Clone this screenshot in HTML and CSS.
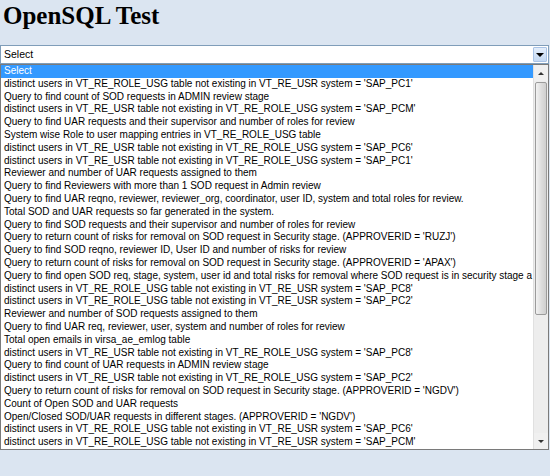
FILE: index.html
```html
<!DOCTYPE html>
<html>
<head>
<meta charset="utf-8">
<title>OpenSQL Test</title>
<link rel="stylesheet" href="styles.css">
</head>
<body>
<h1 class="title">OpenSQL Test</h1>
<div class="combo">
  <div class="combo-value">Select</div>
  <div class="combo-button"><span class="tri-down"></span></div>
</div>
<div class="listbox">
  <ul class="options">
    <li class="opt selected">Select</li>
    <li class="opt">distinct users in VT_RE_ROLE_USG table not existing in VT_RE_USR system = 'SAP_PC1'</li>
    <li class="opt">Query to find count of SOD requests in ADMIN review stage</li>
    <li class="opt">distinct users in VT_RE_USR table not existing in VT_RE_ROLE_USG system = 'SAP_PCM'</li>
    <li class="opt">Query to find UAR requests and their supervisor and number of roles for review</li>
    <li class="opt">System wise Role to user mapping entries in VT_RE_ROLE_USG table</li>
    <li class="opt">distinct users in VT_RE_USR table not existing in VT_RE_ROLE_USG system = 'SAP_PC6'</li>
    <li class="opt">distinct users in VT_RE_USR table not existing in VT_RE_ROLE_USG system = 'SAP_PC1'</li>
    <li class="opt">Reviewer and number of UAR requests assigned to them</li>
    <li class="opt">Query to find Reviewers with more than 1 SOD request in Admin review</li>
    <li class="opt">Query to find UAR reqno, reviewer, reviewer_org, coordinator, user ID, system and total roles for review.</li>
    <li class="opt">Total SOD and UAR requests so far generated in the system.</li>
    <li class="opt">Query to find SOD requests and their supervisor and number of roles for review</li>
    <li class="opt">Query to return count of risks for removal on SOD request in Security stage. (APPROVERID = 'RUZJ')</li>
    <li class="opt">Query to find SOD reqno, reviewer ID, User ID and number of risks for review</li>
    <li class="opt">Query to return count of risks for removal on SOD request in Security stage. (APPROVERID = 'APAX')</li>
    <li class="opt">Query to find open SOD req, stage, system, user id and total risks for removal where SOD request is in security stage a</li>
    <li class="opt">distinct users in VT_RE_ROLE_USG table not existing in VT_RE_USR system = 'SAP_PC8'</li>
    <li class="opt">distinct users in VT_RE_ROLE_USG table not existing in VT_RE_USR system = 'SAP_PC2'</li>
    <li class="opt">Reviewer and number of SOD requests assigned to them</li>
    <li class="opt">Query to find UAR req, reviewer, user, system and number of roles for review</li>
    <li class="opt">Total open emails in virsa_ae_emlog table</li>
    <li class="opt">distinct users in VT_RE_USR table not existing in VT_RE_ROLE_USG system = 'SAP_PC8'</li>
    <li class="opt">Query to find count of UAR requests in ADMIN review stage</li>
    <li class="opt">distinct users in VT_RE_USR table not existing in VT_RE_ROLE_USG system = 'SAP_PC2'</li>
    <li class="opt">Query to return count of risks for removal on SOD request in Security stage. (APPROVERID = 'NGDV')</li>
    <li class="opt">Count of Open SOD and UAR requests</li>
    <li class="opt">Open/Closed SOD/UAR requests in different stages. (APPROVERID = 'NGDV')</li>
    <li class="opt">distinct users in VT_RE_ROLE_USG table not existing in VT_RE_USR system = 'SAP_PC6'</li>
    <li class="opt">distinct users in VT_RE_ROLE_USG table not existing in VT_RE_USR system = 'SAP_PCM'</li>
  </ul>
  <div class="scrollbar">
    <div class="sb-btn"><span class="tri-up"></span></div>
    <div class="sb-track">
      <div class="sb-thumb"></div>
    </div>
    <div class="sb-btn"><span class="tri-down small"></span></div>
  </div>
</div>
</body>
</html>
```

FILE: styles.css
```css
html, body {
  margin: 0;
  padding: 0;
}
body {
  background: #dbe5f1;
  width: 550px;
  height: 476px;
  overflow: hidden;
}
.title {
  margin: 0;
  padding: 2px 0 0 3px;
  height: 42px;
  box-sizing: border-box;
  font-family: "Liberation Serif", "Times New Roman", serif;
  font-weight: bold;
  font-size: 25px;
  line-height: 27px;
  color: #000;
}
.combo {
  margin-top: 3px;
  width: 549px;
  height: 19px;
  box-sizing: border-box;
  border: 1px solid #7f9db9;
  background: #fff;
  display: flex;
  align-items: stretch;
}
.combo-value {
  flex: 1;
  padding-left: 3px;
  font-family: "Liberation Sans", Arial, sans-serif;
  font-size: 10.5px;
  line-height: 17px;
  color: #000;
}
.combo-button {
  width: 14px;
  margin: 1px 1px 1px 0;
  box-sizing: border-box;
  border: 1px solid #a9c3e6;
  border-radius: 1px;
  background: linear-gradient(#e4eefb, #c3d8f2);
  display: flex;
  align-items: center;
  justify-content: center;
}
.tri-down {
  width: 0;
  height: 0;
  border-left: 4px solid transparent;
  border-right: 4px solid transparent;
  border-top: 4px solid #000;
}
.tri-down.small {
  border-left-width: 3px;
  border-right-width: 3px;
  border-top: 3px solid #333;
}
.tri-up {
  width: 0;
  height: 0;
  border-left: 3px solid transparent;
  border-right: 3px solid transparent;
  border-bottom: 3px solid #333;
}
.listbox {
  width: 549px;
  height: 386px;
  box-sizing: border-box;
  border: 1px solid #7a7a7a;
  background: #fff;
  display: flex;
}
.options {
  flex: 1;
  min-width: 0;
  margin: 0;
  padding: 0;
  list-style: none;
  overflow: hidden;
}
.opt {
  height: 12.8px;
  line-height: 12.8px;
  padding-left: 3px;
  white-space: nowrap;
  overflow: hidden;
  font-family: "Liberation Sans", Arial, sans-serif;
  font-size: 10px;
  color: #000;
}
.opt.selected {
  background: #3399ff;
  color: #fff;
}
.scrollbar {
  width: 14px;
  background: #f0f0f0;
  border-left: 1px solid #e0e0e0;
  display: flex;
  flex-direction: column;
}
.sb-btn {
  height: 16px;
  display: flex;
  align-items: center;
  justify-content: center;
  background: #f0f0f0;
}
.sb-track {
  flex: 1;
  background: #ededed;
}
.sb-thumb {
  height: 233px;
  margin: 1px 1px 0 1px;
  box-sizing: border-box;
  border: 1px solid #9b9b9b;
  border-radius: 2px;
  background: linear-gradient(to right, #f2f2f2, #dcdcdc 55%, #cfcfcf);
}
```
